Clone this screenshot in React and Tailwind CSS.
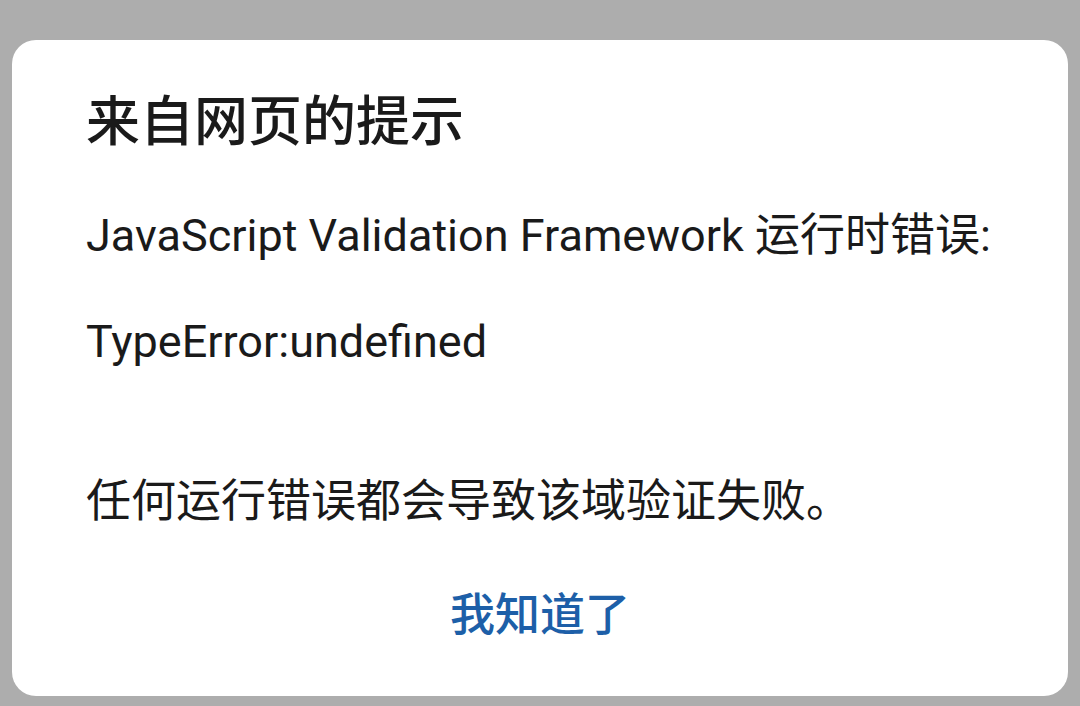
import React from 'react'

const FONT = 'font-[Roboto,"Noto_Sans_CJK_SC",sans-serif]'

export default function App() {
  return (
    <div className={`w-[1080px] h-[706px] bg-[#adadad] pt-[40px] pb-[10px] px-[12px] ${FONT}`}>
      <div className="h-[656px] bg-white rounded-[24px] flex flex-col pl-[74px] pr-[30px] text-[#1a1a1a]">
        <h1 className="mt-[53px] h-[60px] leading-[60px] text-[54px] font-medium">来自网页的提示</h1>

        <p className="mt-[53px] h-[60px] leading-[60px] text-[45px] whitespace-nowrap">
          JavaScript Validation Framework 运行时错误:
        </p>
        <p className="mt-[46px] h-[60px] leading-[60px] text-[45px]">TypeError:undefined</p>

        <p className="mt-[100px] h-[60px] leading-[60px] text-[45px]">任何运行错误都会导致该域验证失败。</p>

        <div className="mt-[54px] -ml-[74px] -mr-[30px] flex justify-center">
          <button className="h-[60px] leading-[60px] text-[45px] font-medium text-[#1d5fa8]">我知道了</button>
        </div>
      </div>
    </div>
  )
}
